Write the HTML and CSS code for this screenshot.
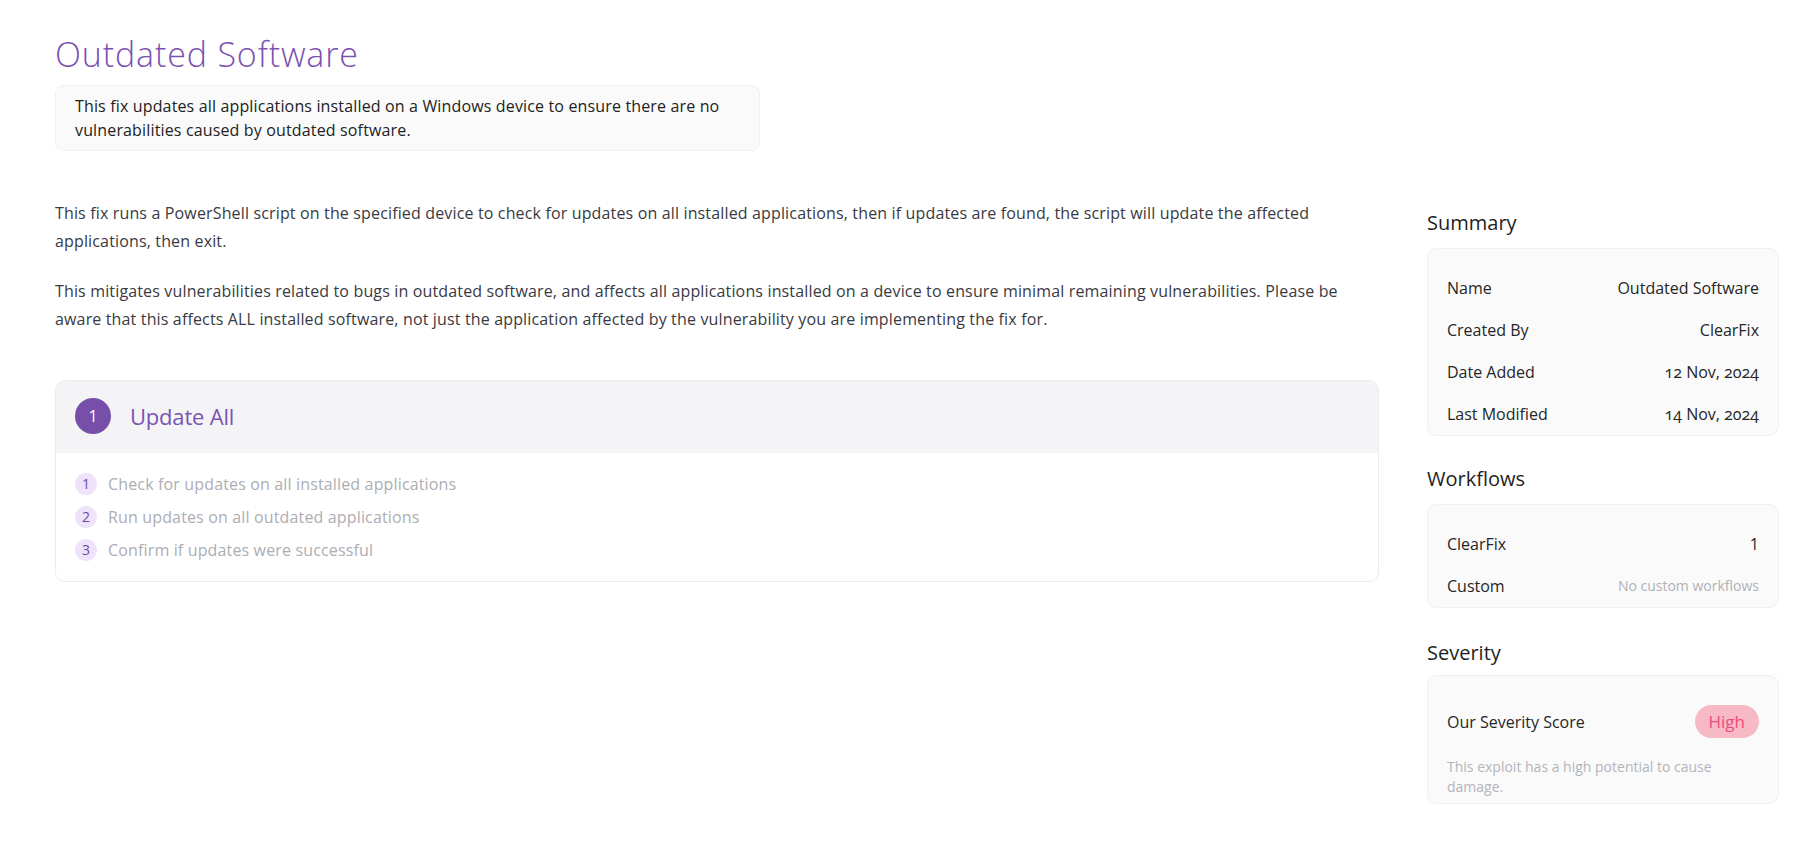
FILE: index.html
```html
<!DOCTYPE html>
<html lang="en">
<head>
<meta charset="utf-8">
<title>Outdated Software</title>
<link rel="stylesheet" href="styles.css">
</head>
<body>
<main class="page">
  <header class="page-head">
    <h1 class="title">Outdated Software</h1>
    <div class="intro-box">This fix updates all applications installed on a Windows device to ensure there are no vulnerabilities caused by outdated software.</div>
  </header>
  <div class="layout">
    <section class="content">
      <p class="para">This fix runs a PowerShell script on the specified device to check for updates on all installed applications, then if updates are found, the script will update the affected applications, then exit.</p>
      <p class="para">This mitigates vulnerabilities related to bugs in outdated software, and affects all applications installed on a device to ensure minimal remaining vulnerabilities. Please be aware that this affects ALL installed software, not just the application affected by the vulnerability you are implementing the fix for.</p>
      <div class="step-card">
        <div class="step-head">
          <span class="step-num">1</span>
          <h2 class="step-title">Update All</h2>
        </div>
        <ol class="step-list">
          <li class="step-item"><span class="sub-num">1</span><span>Check for updates on all installed applications</span></li>
          <li class="step-item"><span class="sub-num">2</span><span>Run updates on all outdated applications</span></li>
          <li class="step-item"><span class="sub-num">3</span><span>Confirm if updates were successful</span></li>
        </ol>
      </div>
    </section>
    <aside class="side">
      <h3 class="side-title">Summary</h3>
      <div class="side-card">
        <div class="row"><span>Name</span><span>Outdated Software</span></div>
        <div class="row"><span>Created By</span><span>ClearFix</span></div>
        <div class="row"><span>Date Added</span><span class="num">12 Nov, 2024</span></div>
        <div class="row"><span>Last Modified</span><span class="num">14 Nov, 2024</span></div>
      </div>
      <h3 class="side-title gap">Workflows</h3>
      <div class="side-card">
        <div class="row"><span>ClearFix</span><span>1</span></div>
        <div class="row"><span>Custom</span><span class="muted">No custom workflows</span></div>
      </div>
      <h3 class="side-title gap sev-title">Severity</h3>
      <div class="side-card sev-card">
        <div class="sev-row"><span>Our Severity Score</span><span class="pill">High</span></div>
        <p class="sev-note">This exploit has a high potential to cause damage.</p>
      </div>
    </aside>
  </div>
</main>
</body>
</html>
```

FILE: styles.css
```css
* { box-sizing: border-box; }
html, body { margin: 0; background: #ffffff; }
body {
  font-family: "Open Sans", "Noto Sans", sans-serif;
  color: #2b2b2b;
  font-size: 16px;
}
.page {
  padding: 34px 30px 0 55px;
}
.title {
  margin: 0;
  font-size: 34px;
  line-height: 40px;
  font-weight: 300;
  letter-spacing: 0.85px;
  color: #7b52b1;
}
.intro-box {
  margin-top: 11px;
  width: 705px;
  padding: 8px 19px;
  border: 1px solid #f0f0f2;
  border-radius: 8px;
  background: #fafafa;
  font-size: 16px;
  line-height: 24px;
  letter-spacing: 0.15px;
  color: #222;
}
.layout {
  margin-top: 48px;
  display: grid;
  grid-template-columns: 1fr 352px;
  column-gap: 48px;
  align-items: start;
}
.para {
  margin: 0 0 22px;
  font-size: 16px;
  line-height: 28px;
  letter-spacing: 0.15px;
  color: #3a3a42;
}
.step-card {
  margin-top: 47px;
  border: 1px solid #ededf0;
  border-radius: 10px;
  overflow: hidden;
}
.step-head {
  display: flex;
  align-items: center;
  gap: 19px;
  padding: 17px 20px 19px 19px;
  background: #f4f4f6;
}
.step-num {
  width: 36px;
  height: 36px;
  border-radius: 50%;
  background: #774fa9;
  color: #fff;
  display: flex;
  align-items: center;
  justify-content: center;
  font-size: 16px;
}
.step-title {
  margin: 0;
  font-size: 22px;
  font-weight: 400;
  letter-spacing: -0.2px;
  color: #7b55b0;
  line-height: 30px;
}
.step-list {
  list-style: none;
  margin: 0;
  padding: 20px 19px 20px;
  display: flex;
  flex-direction: column;
  gap: 11px;
}
.step-item {
  display: flex;
  align-items: center;
  gap: 11px;
  height: 22px;
  color: #adadb3;
  font-size: 16px;
  line-height: 22px;
  letter-spacing: 0.15px;
}
.sub-num {
  width: 22px;
  height: 22px;
  border-radius: 50%;
  background: #efe3fc;
  color: #6e4c9c;
  font-size: 14px;
  letter-spacing: 0;
  display: flex;
  align-items: center;
  justify-content: center;
  flex: none;
}
.side {
  padding-top: 10px;
}
.side-title {
  margin: 0 0 11px;
  font-size: 20px;
  line-height: 28px;
  font-weight: 500;
  color: #1e1e1e;
}
.side-title.gap {
  margin-top: 29px;
}
.side-title.sev-title {
  margin-top: 31px;
  margin-bottom: 8px;
}
.side-card {
  background: #fafafa;
  border: 1px solid #f0f0f2;
  border-radius: 10px;
  padding: 27px 19px 9px;
  display: flex;
  flex-direction: column;
  gap: 18px;
}
.row {
  display: flex;
  justify-content: space-between;
  align-items: center;
  height: 24px;
  line-height: 24px;
  font-size: 16px;
  color: #262626;
}
.num {
  font-variant-numeric: oldstyle-nums;
}
.muted {
  font-size: 14px;
  color: #b1b1b7;
}
.sev-card {
  padding: 29px 19px 6px;
  gap: 19px;
}
.sev-row {
  display: flex;
  justify-content: space-between;
  align-items: center;
  font-size: 16px;
  color: #262626;
}
.pill {
  height: 33px;
  line-height: 33px;
  padding: 0 14px;
  border-radius: 17px;
  background: #f8b9c6;
  color: #ef4b7c;
  font-size: 17px;
}
.sev-note {
  margin: 0;
  font-size: 14px;
  line-height: 20px;
  color: #b4b4ba;
}
```
